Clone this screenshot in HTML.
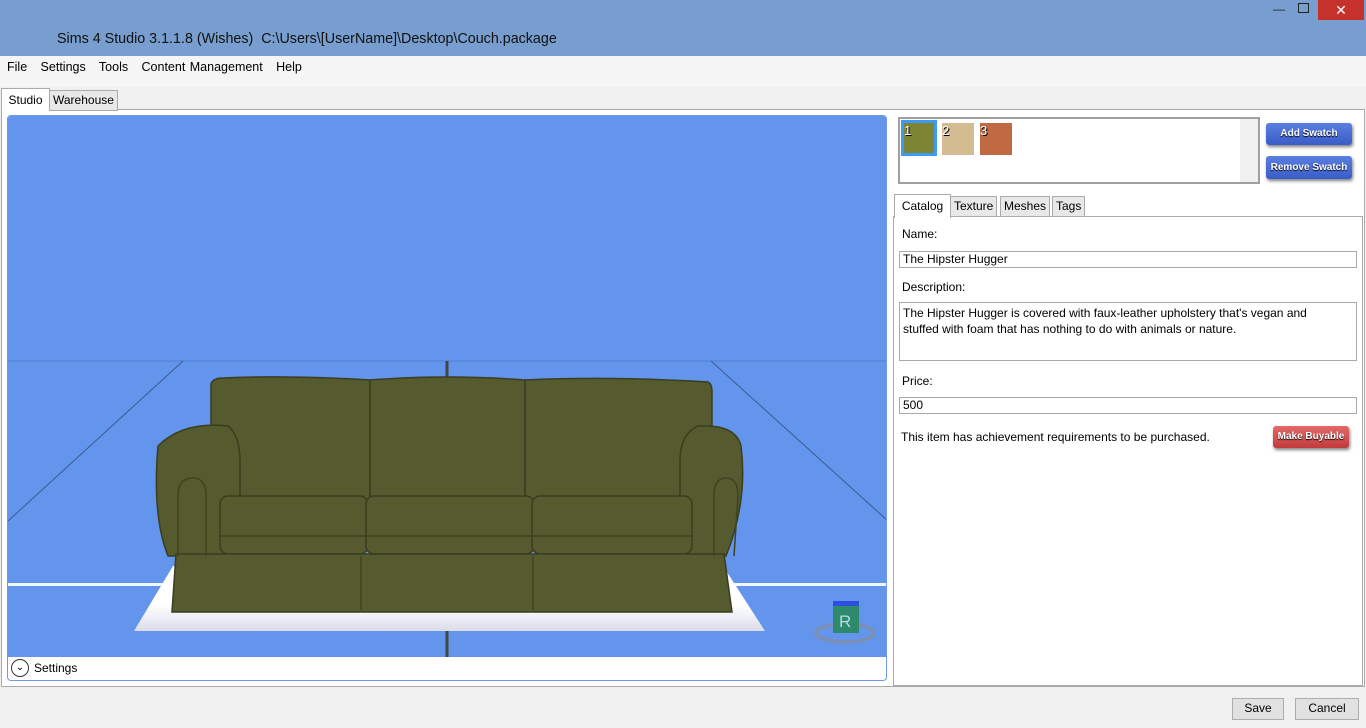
<!DOCTYPE html>
<html><head><style>
body{margin:0;width:1366px;height:728px;background:#f0f0f0;font-family:"Liberation Sans",sans-serif;font-size:12px;color:#000;position:relative;overflow:hidden}
.a{position:absolute}
.btnb{position:absolute;background:linear-gradient(#5b7fe0,#3a5cc8);color:#fff;font-weight:bold;font-size:10px;text-align:center;border-radius:3px;box-shadow:1px 2px 3px rgba(0,0,0,.5);text-shadow:0 1px 1px #000}
.tab{position:absolute;border:1px solid #aaa;background:#e8e8e8;font-size:12px;padding:0 3px;height:19px;line-height:19px}
.inp{position:absolute;border:1px solid #a9a9a9;background:#fff;font-size:12px;padding:0 3px;box-sizing:border-box}
.b2{position:absolute;border:1px solid #adadad;background:#e1e1e1;font-size:12px;text-align:center;line-height:19px;height:20px}
</style></head><body>
<div class="a" style="left:0;top:0;width:1366px;height:56px;background:#779ecf"></div>
<div class="a" style="left:57px;top:31px;font-size:14.3px;color:#111">Sims 4 Studio 3.1.1.8 (Wishes)&nbsp; C:\Users\[UserName]\Desktop\Couch.package</div>
<div class="a" style="left:1273px;top:2px;color:#222;font-size:12px">&#8212;</div>
<div class="a" style="left:1298px;top:3px;width:9px;height:8px;border:1px solid #222"></div>
<div class="a" style="left:1318px;top:0;width:46px;height:20px;background:#c7312c;color:#fff;text-align:center;font-size:14px;line-height:20px">✕</div>
<div class="a" style="left:0;top:56px;width:1366px;height:31px;background:#f5f5f5"></div>
<div class="a" style="left:7px;top:60px;font-size:12.5px;word-spacing:1px">File&nbsp;&nbsp; Settings&nbsp;&nbsp; Tools&nbsp;&nbsp; Content Management&nbsp;&nbsp; Help</div>
<div class="a" style="left:1px;top:109px;width:1364px;height:578px;background:#fff;border:1px solid #aaa;box-sizing:border-box"></div>
<div class="a" style="left:1px;top:88px;width:47px;height:22px;background:#fff;border:1px solid #aaa;border-bottom:none;line-height:22px;text-align:center">Studio</div>
<div class="tab" style="left:49px;top:90px">Warehouse</div>
<div class="a" style="left:7px;top:115px;width:880px;height:566px;border:1px solid #6d9ae8;border-radius:4px;background:#fff;box-sizing:border-box;overflow:hidden">
<svg width="880" height="566" style="position:absolute;left:0;top:0">
<defs>
<linearGradient id="fl" x1="0" y1="0" x2="0" y2="1"><stop offset="0.6" stop-color="#fff"/><stop offset="1" stop-color="#dcdcea"/></linearGradient>
</defs>
<rect width="880" height="541" fill="#6495ed"/>
<line x1="0" y1="245" x2="880" y2="245" stroke="#4f7fce" stroke-width="1"/>
<line x1="0" y1="405" x2="175" y2="245" stroke="#3a5a90" stroke-width="1"/>
<line x1="880" y1="405" x2="703" y2="245" stroke="#3a5a90" stroke-width="1"/>
<line x1="439" y1="245" x2="439" y2="541" stroke="#444" stroke-width="3"/>
<rect x="0" y="467" width="880" height="3" fill="#f0f8ff"/>
<polygon points="165,450 715,450 757,515 126,515" fill="url(#fl)"/>
<g fill="#555a2f" stroke="#3a3d1e" stroke-width="1.5">
<path d="M203,268 Q205,262 215,262 Q280,259 362,264 L362,385 L203,385 Z"/>
<path d="M362,264 Q440,258 517,264 L517,385 L362,385 Z"/>
<path d="M517,264 Q600,260 700,266 Q704,268 704,275 L704,385 L517,385 Z"/>
<path d="M150,330 Q175,305 220,310 Q232,320 232,345 L232,440 L160,440 Q144,400 150,330Z"/>
<path d="M690,310 Q728,308 733,330 Q740,385 718,440 L672,440 L672,345 Q672,318 690,310Z"/>
<rect x="212" y="380" width="148" height="58" rx="8"/>
<rect x="358" y="380" width="168" height="58" rx="8"/>
<rect x="524" y="380" width="160" height="58" rx="8"/>
<path d="M168,438 L716,438 L724,496 L164,496 Z"/>
</g>
<g stroke="#3f4321" stroke-width="1.5" fill="none">
<line x1="212" y1="420" x2="684" y2="420"/>
<line x1="353" y1="440" x2="353" y2="494"/><line x1="525" y1="440" x2="525" y2="494"/>
<path d="M170,440 L170,380 Q170,362 185,362 Q198,362 198,380 L198,440"/>
<path d="M706,440 L706,380 Q706,362 718,362 Q730,362 730,380 L726,440"/>
</g>
<ellipse cx="837" cy="517" rx="29" ry="9" fill="none" stroke="#7a8fb8" stroke-width="4"/>
<rect x="825" y="487" width="26" height="30" fill="#2d8b6c"/>
<rect x="825" y="485" width="26" height="5" fill="#2c4fe0"/>
<text x="831" y="511" font-size="17" fill="#b6dbe8" font-family="Liberation Sans">R</text>
</svg>
<div class="a" style="left:3px;top:543px;width:16px;height:16px;border:1px solid #333;border-radius:50%;font-size:10px;text-align:center;line-height:15px">&#8964;</div>
<div class="a" style="left:26px;top:545px;font-size:12px">Settings</div>
</div>
<div class="a" style="left:898px;top:117px;width:362px;height:67px;border:2px solid #a0a0a0;background:#fff;box-sizing:border-box"></div>
<div class="a" style="left:1240px;top:119px;width:18px;height:63px;background:#f0f0f0"></div>
<div class="a" style="left:901px;top:120px;width:36px;height:36px;background:#3b9bf5"></div>
<div class="a" style="left:904px;top:123px;width:30px;height:30px;background:#7d8534;color:#fff;font-size:13px;text-shadow:1px 1px #000">1</div>
<div class="a" style="left:942px;top:123px;width:32px;height:32px;background:#d4bc92;color:#fff;font-size:13px;text-shadow:1px 1px #000">2</div>
<div class="a" style="left:980px;top:123px;width:32px;height:32px;background:#c06a44;color:#fff;font-size:13px;text-shadow:1px 1px #000">3</div>
<div class="btnb" style="left:1266px;top:123px;width:86px;height:22px;line-height:22px">Add Swatch</div>
<div class="btnb" style="left:1266px;top:156px;width:86px;height:23px;line-height:23px">Remove Swatch</div>
<div class="a" style="left:893px;top:216px;width:470px;height:470px;border:1px solid #aaa;box-sizing:border-box;background:#fff"></div>
<div class="a" style="left:894px;top:194px;width:55px;height:23px;background:#fff;border:1px solid #aaa;border-bottom:none;line-height:23px;text-align:center">Catalog</div>
<div class="tab" style="left:950px;top:196px">Texture</div>
<div class="tab" style="left:1000px;top:196px">Meshes</div>
<div class="tab" style="left:1052px;top:196px">Tags</div>
<div class="a" style="left:902px;top:227px">Name:</div>
<div class="inp" style="left:899px;top:251px;width:458px;height:17px;line-height:15px">The Hipster Hugger</div>
<div class="a" style="left:902px;top:280px">Description:</div>
<div class="inp" style="left:899px;top:302px;width:458px;height:59px;padding-top:2px;line-height:16px;padding-right:30px">The Hipster Hugger is covered with faux-leather upholstery that's vegan and stuffed with foam that has nothing to do with animals or nature.</div>
<div class="a" style="left:902px;top:374px">Price:</div>
<div class="inp" style="left:899px;top:397px;width:458px;height:17px;line-height:15px">500</div>
<div class="a" style="left:901px;top:430px">This item has achievement requirements to be purchased.</div>
<div class="btnb" style="left:1273px;top:426px;width:76px;height:22px;line-height:22px;background:linear-gradient(#e36a6a,#c23b3b)">Make Buyable</div>
<div class="b2" style="left:1232px;top:698px;width:50px">Save</div>
<div class="b2" style="left:1295px;top:698px;width:62px">Cancel</div>
</body></html>
